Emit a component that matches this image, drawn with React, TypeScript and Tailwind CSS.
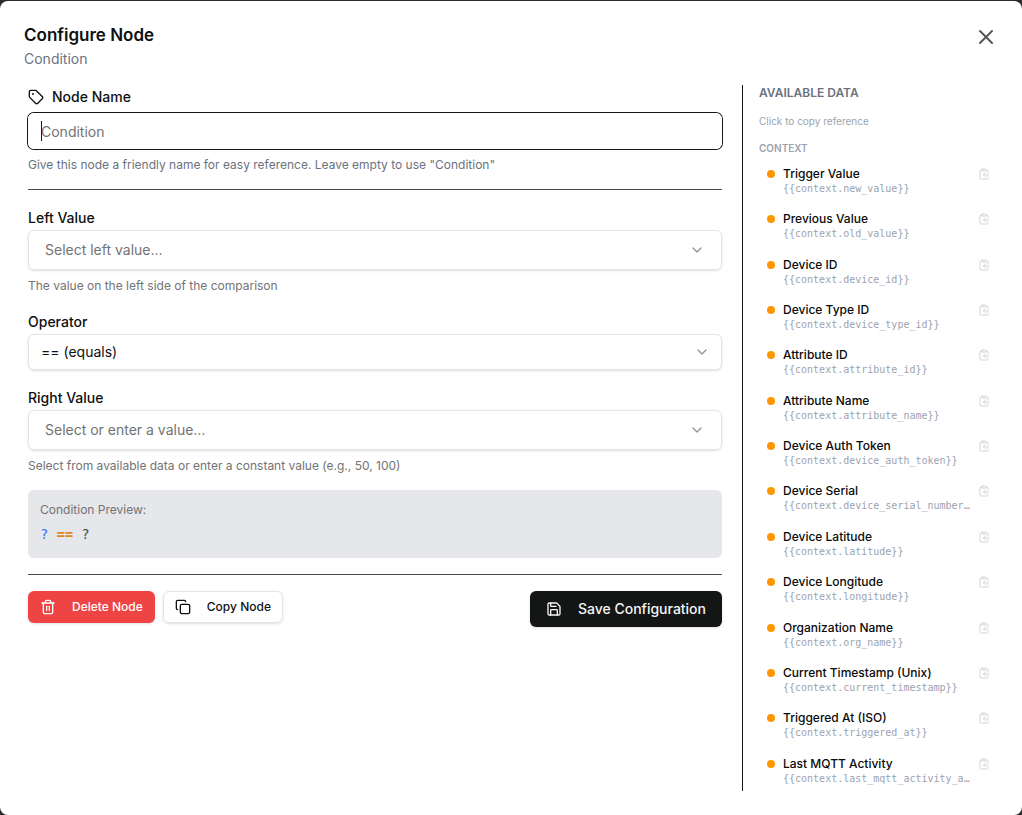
import { useState } from 'react';
import { ChevronDown, ClipboardCopy, Copy, Save, Tag, Trash2, X } from 'lucide-react';

interface ContextItem {
  label: string;
  path: string;
}

const contextItems: ContextItem[] = [
  { label: 'Trigger Value', path: 'new_value' },
  { label: 'Previous Value', path: 'old_value' },
  { label: 'Device ID', path: 'device_id' },
  { label: 'Device Type ID', path: 'device_type_id' },
  { label: 'Attribute ID', path: 'attribute_id' },
  { label: 'Attribute Name', path: 'attribute_name' },
  { label: 'Device Auth Token', path: 'device_auth_token' },
  { label: 'Device Serial', path: 'device_serial_number' },
  { label: 'Device Latitude', path: 'latitude' },
  { label: 'Device Longitude', path: 'longitude' },
  { label: 'Organization Name', path: 'org_name' },
  { label: 'Current Timestamp (Unix)', path: 'current_timestamp' },
  { label: 'Triggered At (ISO)', path: 'triggered_at' },
  { label: 'Last MQTT Activity', path: 'last_mqtt_activity_at' },
];

const operators = [
  { value: '==', label: '== (equals)' },
  { value: '!=', label: '!= (not equals)' },
  { value: '>', label: '> (greater than)' },
  { value: '<', label: '< (less than)' },
];

function DataRow({ item }: { item: ContextItem }) {
  return (
    <button type="button" className="flex w-full items-start gap-2 rounded px-2 text-left hover:bg-gray-100">
      <span className="mt-3.5 size-2 shrink-0 rounded-full bg-[#ff9800]" />
      <span className="flex min-w-0 flex-1 flex-col pt-2.5">
        <span className="truncate text-xs leading-4 font-medium text-[#0a0a0a]">{item.label}</span>
        <span className="truncate font-['DejaVu_Sans_Mono',monospace] text-[10px] leading-[14px] text-[#9ca3af]">
          {`{{context.${item.path}}}`}
        </span>
      </span>
      <ClipboardCopy className="mt-3 size-3 shrink-0 text-[#d4d4d4]" />
    </button>
  );
}

interface ValuePickerProps {
  id: string;
  label: string;
  placeholder: string;
  hint: string;
}

function ValuePicker({ id, label, placeholder, hint }: ValuePickerProps) {
  return (
    <div className="flex flex-col">
      <label htmlFor={id} className="text-sm leading-6 font-medium">
        {label}
      </label>
      <button
        id={id}
        type="button"
        className="flex h-10 items-center justify-between rounded-md border border-[#e5e5e5] px-4 text-sm text-[#737373] shadow-sm"
      >
        {placeholder}
        <ChevronDown className="size-4 text-[#949494]" />
      </button>
      <p className="mt-2 text-xs leading-4 text-[#737373]">{hint}</p>
    </div>
  );
}

export default function App() {
  const [name, setName] = useState('');
  const [operator, setOperator] = useState('==');

  return (
    <div className="flex min-h-screen flex-col bg-[#2b2b2d] pt-px font-[Inter,sans-serif] text-[#0f1111]">
      <div role="dialog" aria-labelledby="dialog-title" className="flex flex-1 flex-col rounded-lg bg-white px-6 pt-5 pb-6">
        <header className="flex items-start justify-between">
          <div>
            <h1 id="dialog-title" className="text-[17px] leading-7 font-semibold">
              Configure Node
            </h1>
            <p className="text-sm leading-5 text-[#6b7280]">Condition</p>
          </div>
          <button type="button" aria-label="Close" className="mt-1 text-[#555555]">
            <X className="size-6" />
          </button>
        </header>

        <div className="mt-4 flex flex-1">
          <form className="min-w-0 flex-1 pr-5 pl-1" onSubmit={(e) => e.preventDefault()}>
            <label htmlFor="node-name" className="flex items-center gap-2 text-sm leading-6 font-medium">
              <Tag className="size-4" />
              Node Name
            </label>
            <div className="relative mt-1">
              <input
                id="node-name"
                value={name}
                onChange={(e) => setName(e.target.value)}
                placeholder="Condition"
                className="block h-9 w-full rounded-md border border-white px-3 text-sm caret-transparent ring-1 ring-[#171717] outline-none placeholder:text-[#737373]"
              />
              {name === '' && <span className="pointer-events-none absolute top-2 left-[13px] h-5 w-px bg-[#171717]" />}
            </div>
            <p className="mt-2 text-xs leading-4 text-[#6b7280]">
              Give this node a friendly name for easy reference. Leave empty to use "Condition"
            </p>

            <div className="mt-4 flex flex-col gap-4 border-y border-[#4a4a4a] pt-4 pb-4">
              <ValuePicker
                id="left-value"
                label="Left Value"
                placeholder="Select left value…"
                hint="The value on the left side of the comparison"
              />
              <div className="flex flex-col">
                <label htmlFor="operator" className="text-sm leading-6 font-medium">
                  Operator
                </label>
                <div className="grid items-center">
                  <select
                    id="operator"
                    value={operator}
                    onChange={(e) => setOperator(e.target.value)}
                    className="col-start-1 row-start-1 h-9 appearance-none rounded-md border border-[#e5e5e5] bg-white px-3 text-sm shadow-sm"
                  >
                    {operators.map((op) => (
                      <option key={op.value} value={op.value}>
                        {op.label}
                      </option>
                    ))}
                  </select>
                  <ChevronDown className="pointer-events-none col-start-1 row-start-1 mr-3 size-4 justify-self-end text-[#949494]" />
                </div>
              </div>
              <ValuePicker
                id="right-value"
                label="Right Value"
                placeholder="Select or enter a value…"
                hint="Select from available data or enter a constant value (e.g., 50, 100)"
              />
              <div className="rounded-md bg-[#e5e7eb] p-3 text-[#737373]">
                <p className="text-xs leading-4">Condition Preview:</p>
                <p className="mt-1 flex gap-2 font-['DejaVu_Sans_Mono',monospace] text-sm leading-6">
                  <span className="text-[#3b6ef0]">?</span>
                  <span className="font-bold text-[#e08a1e]">{operator}</span>
                  <span className="text-[#4b4b4b]">?</span>
                </p>
              </div>
            </div>

            <div className="mt-4 flex items-start gap-2">
              <button
                type="button"
                className="flex h-8 items-center gap-4 rounded-md bg-[#ef4444] px-3 text-xs font-medium text-white shadow-sm"
              >
                <Trash2 className="size-4" />
                Delete Node
              </button>
              <button
                type="button"
                className="flex h-8 items-center gap-4 rounded-md border border-[#e5e5e5] px-[11px] text-xs font-medium shadow-sm"
              >
                <Copy className="size-4" />
                Copy Node
              </button>
              <button
                type="submit"
                className="ml-auto flex h-9 items-center gap-4 rounded-md bg-[#141616] px-4 text-sm font-medium text-[#f5f5f5] shadow-sm"
              >
                <Save className="size-4" />
                Save Configuration
              </button>
            </div>
          </form>

          <aside className="flex w-64 shrink-0 flex-col border-l border-[#171717] pl-4">
            <h2 className="text-xs leading-4 font-semibold text-[#6b7280]">AVAILABLE DATA</h2>
            <p className="mt-3 text-[10px] leading-4 text-[#9ca3af]">Click to copy reference</p>
            <h3 className="mt-[11px] text-[10px] leading-4 font-semibold text-[#9ca3af]">CONTEXT</h3>
            <div className="grid flex-1 grid-cols-1">
              {contextItems.map((item) => (
                <DataRow key={item.path} item={item} />
              ))}
            </div>
          </aside>
        </div>
      </div>
    </div>
  );
}
